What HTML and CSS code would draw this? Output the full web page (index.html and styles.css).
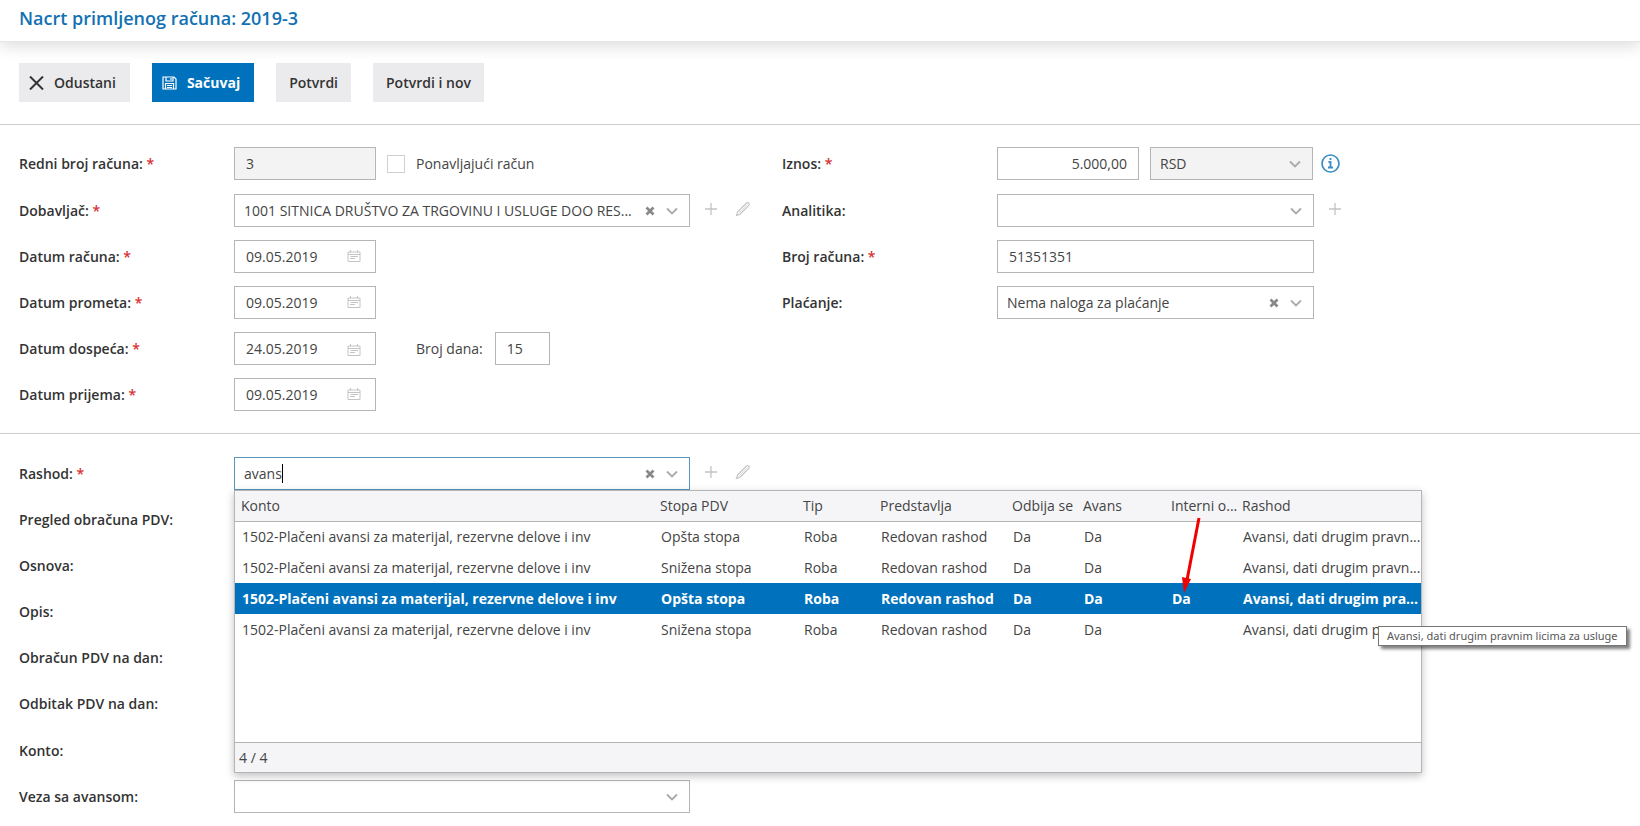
FILE: index.html
```html
<!DOCTYPE html>
<html lang="sr-Latn">
<head>
<meta charset="utf-8">
<meta name="viewport" content="width=device-width, initial-scale=1">
<title>Nacrt primljenog računa: 2019-3</title>
<link rel="stylesheet" href="styles.css">
</head>
<body>
<svg class="sprite" aria-hidden="true">
  <symbol id="chevron" viewBox="0 0 12 12"><path d="M1 3.500 6 8.500l5-5" fill="none" stroke="currentColor" stroke-width="1.800"/></symbol>
  <symbol id="clear" viewBox="0 0 10 10"><path d="m1.500 1.500 7 7m0-7-7 7" fill="none" stroke="currentColor" stroke-width="2.700"/></symbol>
  <symbol id="plus" viewBox="0 0 14 14"><path d="M7 1v12M1 7h12" fill="none" stroke="currentColor" stroke-width="1.300"/></symbol>
  <symbol id="pencil" viewBox="0 0 16 16"><path d="m1.500 14.500 1.200-3.700L11.500 2q1.200-1 2.300 0 1 1.200 0 2.300L5 13.200z" fill="none" stroke="currentColor" stroke-width="1.200"/><path d="m4 12 8.500-8.500" fill="none" stroke="currentColor" stroke-width=".6"/></symbol>
  <symbol id="calendar" viewBox="0 0 14 12"><path d="M1 2h12v9.500H1zM1 4.500h12M3.500 0v2.500M10.500 0v2.500M3.500 6.500h7.500M3 8.500h5" fill="none" stroke="currentColor"/></symbol>
</svg>

<header class="header"><h1 class="title">Nacrt primljenog računa: 2019-3</h1></header>

<div class="toolbar">
  <button type="button" class="btn btn-icon">
    <svg width="15" height="14" viewBox="0 0 15 14" aria-hidden="true"><path d="m1 .500 13 13M14 .500l-13 13" fill="none" stroke="currentColor" stroke-width="2"/></svg>
    Odustani
  </button>
  <button type="button" class="btn btn-icon btn-primary">
    <svg width="15" height="14" viewBox="0 0 15 14" aria-hidden="true"><path d="M1 1h11l2 2v10H1zM4 1v4h7V1M9 2v2M3.500 13V7.500h8V13M5 9.500h5M5 11.500h5" fill="none" stroke="currentColor" stroke-width="1.200"/></svg>
    Sačuvaj
  </button>
  <button type="button" class="btn">Potvrdi</button>
  <button type="button" class="btn">Potvrdi i nov</button>
</div>

<form class="form">
  <section class="section section-top">
    <div class="column">
      <div class="row row-tall">
        <label class="label" for="redni">Redni broj računa: <span class="req">*</span></label>
        <input class="field field-short" id="redni" type="text" value="3" readonly>
        <label class="check"><input class="checkbox" type="checkbox">Ponavljajući račun</label>
      </div>
      <div class="row">
        <label class="label" for="dobavljac">Dobavljač: <span class="req">*</span></label>
        <div class="combo combo-wide">
          <input class="combo-input" id="dobavljac" type="text" role="combobox" aria-expanded="false" value="1001 SITNICA DRUŠTVO ZA TRGOVINU I USLUGE DOO RES...">
          <button type="button" class="clear" aria-label="Obriši"><svg width="10" height="10"><use href="#clear"/></svg></button>
          <button type="button" class="arrow" aria-label="Otvori"><svg width="12" height="12"><use href="#chevron"/></svg></button>
        </div>
        <div class="actions">
          <button type="button" class="action" aria-label="Dodaj"><svg width="14" height="14"><use href="#plus"/></svg></button>
          <button type="button" class="action" aria-label="Izmeni"><svg width="16" height="16"><use href="#pencil"/></svg></button>
        </div>
      </div>
      <div class="row">
        <label class="label" for="d1">Datum računa: <span class="req">*</span></label>
        <div class="date"><input class="date-input" id="d1" type="text" value="09.05.2019"><button type="button" class="action" aria-label="Kalendar"><svg width="14" height="12"><use href="#calendar"/></svg></button></div>
      </div>
      <div class="row">
        <label class="label" for="d2">Datum prometa: <span class="req">*</span></label>
        <div class="date"><input class="date-input" id="d2" type="text" value="09.05.2019"><button type="button" class="action" aria-label="Kalendar"><svg width="14" height="12"><use href="#calendar"/></svg></button></div>
      </div>
      <div class="row">
        <label class="label" for="d3">Datum dospeća: <span class="req">*</span></label>
        <div class="date date-low"><input class="date-input" id="d3" type="text" value="24.05.2019"><button type="button" class="action" aria-label="Kalendar"><svg width="14" height="12"><use href="#calendar"/></svg></button></div>
        <label class="days" for="dana">Broj dana:</label>
        <input class="field field-days" id="dana" type="text" value="15">
      </div>
      <div class="row">
        <label class="label" for="d4">Datum prijema: <span class="req">*</span></label>
        <div class="date"><input class="date-input" id="d4" type="text" value="09.05.2019"><button type="button" class="action" aria-label="Kalendar"><svg width="14" height="12"><use href="#calendar"/></svg></button></div>
      </div>
    </div>

    <div class="column">
      <div class="row row-tall">
        <label class="label" for="iznos">Iznos: <span class="req">*</span></label>
        <div class="amount">
          <input class="field field-amount" id="iznos" type="text" value="5.000,00">
          <div class="combo combo-off">
            <select class="combo-input" aria-label="Valuta" disabled><option>RSD</option></select>
            <span class="arrow"><svg width="12" height="12"><use href="#chevron"/></svg></span>
          </div>
        </div>
        <button type="button" class="info" aria-label="Informacije">
          <svg width="19" height="19" viewBox="0 0 19 19" aria-hidden="true"><circle cx="9.500" cy="9.500" r="8.500" fill="none" stroke="currentColor" stroke-width="1.700"/><path d="M9.500 4v2M7.500 8h2v5.500M7 13.500h5" fill="none" stroke="currentColor" stroke-width="1.800"/></svg>
        </button>
      </div>
      <div class="row">
        <label class="label" for="analitika">Analitika:</label>
        <div class="combo combo-medium">
          <select class="combo-input" id="analitika"><option></option></select>
          <span class="arrow"><svg width="12" height="12"><use href="#chevron"/></svg></span>
        </div>
        <div class="actions"><button type="button" class="action" aria-label="Dodaj"><svg width="14" height="14"><use href="#plus"/></svg></button></div>
      </div>
      <div class="row">
        <label class="label" for="broj">Broj računa: <span class="req">*</span></label>
        <input class="field field-medium" id="broj" type="text" value="51351351">
      </div>
      <div class="row">
        <label class="label" for="placanje">Plaćanje:</label>
        <div class="combo combo-medium">
          <select class="combo-input" id="placanje"><option>Nema naloga za plaćanje</option></select>
          <button type="button" class="clear" aria-label="Obriši"><svg width="10" height="10"><use href="#clear"/></svg></button>
          <span class="arrow"><svg width="12" height="12"><use href="#chevron"/></svg></span>
        </div>
      </div>
    </div>
  </section>

  <section class="section section-bottom">
    <div class="row">
      <label class="label" for="rashod">Rashod: <span class="req">*</span></label>
      <div class="picker">
        <div class="combo combo-wide combo-active">
          <div class="typed"><input class="typed-input" id="rashod" type="text" role="combobox" aria-expanded="true" aria-controls="lista" size="5" value="avans"><span class="caret"></span></div>
          <button type="button" class="clear" aria-label="Obriši"><svg width="10" height="10"><use href="#clear"/></svg></button>
          <button type="button" class="arrow" aria-label="Zatvori"><svg width="12" height="12"><use href="#chevron"/></svg></button>
        </div>
        <div class="dropdown" id="lista">
          <div class="list">
            <table class="table">
              <colgroup><col class="c-konto"><col class="c-stopa"><col class="c-tip"><col class="c-pred"><col class="c-odb"><col class="c-avans"><col class="c-int"><col></colgroup>
              <thead><tr><th>Konto</th><th>Stopa PDV</th><th>Tip</th><th>Predstavlja</th><th>Odbija se</th><th>Avans</th><th>Interni o...</th><th>Rashod</th></tr></thead>
              <tbody>
                <tr><td>1502-Plačeni avansi za materijal, rezervne delove i inv</td><td>Opšta stopa</td><td>Roba</td><td>Redovan rashod</td><td>Da</td><td>Da</td><td></td><td>Avansi, dati drugim pravn...</td></tr>
                <tr><td>1502-Plačeni avansi za materijal, rezervne delove i inv</td><td>Snižena stopa</td><td>Roba</td><td>Redovan rashod</td><td>Da</td><td>Da</td><td></td><td>Avansi, dati drugim pravn...</td></tr>
                <tr class="selected"><td>1502-Plačeni avansi za materijal, rezervne delove i inv</td><td>Opšta stopa</td><td>Roba</td><td>Redovan rashod</td><td>Da</td><td>Da</td><td>Da</td><td>Avansi, dati drugim pra...</td></tr>
                <tr><td>1502-Plačeni avansi za materijal, rezervne delove i inv</td><td>Snižena stopa</td><td>Roba</td><td>Redovan rashod</td><td>Da</td><td>Da</td><td></td><td>Avansi, dati drugim pravn...</td></tr>
              </tbody>
            </table>
          </div>
          <div class="count">4 / 4</div>
          <svg class="pointer" width="28" height="78" viewBox="0 0 28 78" aria-hidden="true"><path d="M21 2 9 64" stroke="#f00000" stroke-width="3"/><path d="m4 61 9 2-7 14z" fill="#f00000"/></svg>
          <div class="tooltip" role="tooltip">Avansi, dati drugim pravnim licima za usluge</div>
        </div>
      </div>
      <div class="actions">
        <button type="button" class="action" aria-label="Dodaj"><svg width="14" height="14"><use href="#plus"/></svg></button>
        <button type="button" class="action" aria-label="Izmeni"><svg width="16" height="16"><use href="#pencil"/></svg></button>
      </div>
    </div>
    <div class="row"><span class="label">Pregled obračuna PDV:</span></div>
    <div class="row"><span class="label">Osnova:</span></div>
    <div class="row"><span class="label">Opis:</span></div>
    <div class="row"><span class="label">Obračun PDV na dan:</span></div>
    <div class="row row-tall"><span class="label">Odbitak PDV na dan:</span></div>
    <div class="row"><span class="label">Konto:</span></div>
    <div class="row">
      <label class="label" for="veza">Veza sa avansom:</label>
      <div class="combo combo-wide">
        <select class="combo-input" id="veza"><option></option></select>
        <span class="arrow"><svg width="12" height="12"><use href="#chevron"/></svg></span>
      </div>
    </div>
  </section>
</form>
</body>
</html>
```
FILE: styles.css
```css
* { box-sizing: border-box; }

body {
  margin: 0;
  background: #fff;
  color: #444;
  font: 14px/20px "Open Sans", "Noto Sans", sans-serif;
}

input, select, button { font: inherit; color: inherit; border-radius: 0; }
button { margin: 0; padding: 0; border: 0; background: none; }
svg { display: block; }
.sprite { position: absolute; width: 0; height: 0; }

.header {
  padding: 6px 19px 11px;
  border-bottom: 1px solid #e6e6e6;
  box-shadow: 0 4px 16px rgba(0, 0, 0, 0.14);
}
.title {
  margin: 0;
  color: #1271b3;
  font-size: 18px;
  line-height: 24px;
  font-weight: 600;
}

.toolbar {
  display: flex;
  gap: 22px;
  padding: 21px 19px 22px;
  border-bottom: 1px solid #ccc;
}
.btn {
  display: flex;
  align-items: center;
  gap: 10px;
  height: 39px;
  padding: 0 13px;
  background: #ebebed;
  color: #333;
  font-weight: 600;
}
.btn-icon { padding: 0 14px 0 10px; }
.btn-primary { background: #0071bc; color: #fff; font-weight: 700; }

.section { display: grid; }
.section-top {
  grid-template-columns: minmax(0, 763px) minmax(0, 1fr);
  padding: 22px 19px;
  border-bottom: 1px solid #ccc;
}
.section-bottom { gap: 13px; padding: 23px 19px 12px; }
.column { display: flex; flex-direction: column; gap: 13px; }
.row { display: flex; align-items: center; min-height: 33px; }
.row-tall { min-height: 34px; padding-bottom: 1px; }

.label { flex: 0 0 215px; color: #333; font-weight: 600; }
.req { color: #d93030; }

.field, .combo, .date {
  height: 33px;
  border: 1px solid #b5b5b5;
  background: #fff;
}
.field { padding: 0 11px; outline: 0; }
.field:read-only { background: #f3f3f3; }
.field-short, .date { width: 142px; }
.field-days { width: 55px; }
.field-amount { width: 142px; text-align: right; }
.field-medium, .combo-medium { width: 317px; }
.combo-wide { width: 456px; }
.amount { display: flex; gap: 11px; width: 316px; }
.amount .combo { flex: 1; }

.combo { display: flex; align-items: center; padding-right: 11px; }
.combo-input {
  flex: 1;
  min-width: 0;
  height: 31px;
  padding: 0 0 0 9px;
  border: 0;
  outline: 0;
  background: transparent;
  appearance: none;
  opacity: 1;
}
.combo-off { background: #f3f3f3; }
.combo-active { border-color: #5796bd; }
.clear { margin-right: 11px; color: #888; }
.arrow { color: #aaa; }

.typed { display: flex; flex: 1; align-items: center; padding-left: 9px; }
.typed-input {
  field-sizing: content;
  padding: 0;
  border: 0;
  outline: 0;
  background: transparent;
}
.caret { width: 1px; height: 19px; background: #000; }

.date { display: flex; align-items: center; padding: 0 14px 0 11px; }
.date-input { flex: 1; min-width: 0; padding: 0; border: 0; outline: 0; background: transparent; }
.date .action { padding-bottom: 2px; }
.date-low .action { padding: 2px 0 0; }

.check { display: flex; align-items: center; gap: 11px; margin-left: 11px; }
.checkbox {
  width: 18px;
  height: 18px;
  margin: 0;
  border: 1px solid #d0d0d0;
  background: #fff;
  appearance: none;
}
.days { margin: 0 12px 0 40px; }

.actions { display: flex; align-items: center; gap: 17px; margin-left: 14px; padding-bottom: 4px; }
.action { color: #c4c4c4; }
.info { margin-left: 8px; color: #3a8cc4; }

.picker { position: relative; }
.dropdown {
  position: absolute;
  z-index: 2;
  top: 33px;
  left: 0;
  width: 1188px;
  border: 1px solid #b5b5b5;
  background: #fff;
  box-shadow: 0 3px 8px rgba(0, 0, 0, 0.25);
}
.list { min-height: 251px; }
.table { width: 100%; border-collapse: collapse; table-layout: fixed; }
.table th, .table td {
  height: 31px;
  padding: 0 0 0 7px;
  text-align: left;
  white-space: nowrap;
}
.table th {
  height: 30px;
  padding-left: 6px;
  border-bottom: 1px solid #b5b5b5;
  background: #f5f5f8;
  font-weight: 400;
}
.selected { background: #0071bc; color: #fff; font-weight: 700; }
.c-konto { width: 419px; }
.c-stopa { width: 143px; }
.c-tip { width: 77px; }
.c-pred { width: 132px; }
.c-odb { width: 71px; }
.c-avans { width: 88px; }
.c-int { width: 71px; }
.count { padding: 5px 4px 4px; border-top: 1px solid #b5b5b5; background: #f5f5f8; }

.pointer { position: absolute; top: 25px; left: 943px; }
.tooltip {
  position: absolute;
  top: 135px;
  left: 1143px;
  padding: 0 8px;
  border: 1px solid #767676;
  background: #fff;
  box-shadow: 3px 3px 3px rgba(0, 0, 0, 0.5);
  color: #575757;
  font: 11px/18px "Noto Sans", "Open Sans", sans-serif;
  white-space: nowrap;
}
```
